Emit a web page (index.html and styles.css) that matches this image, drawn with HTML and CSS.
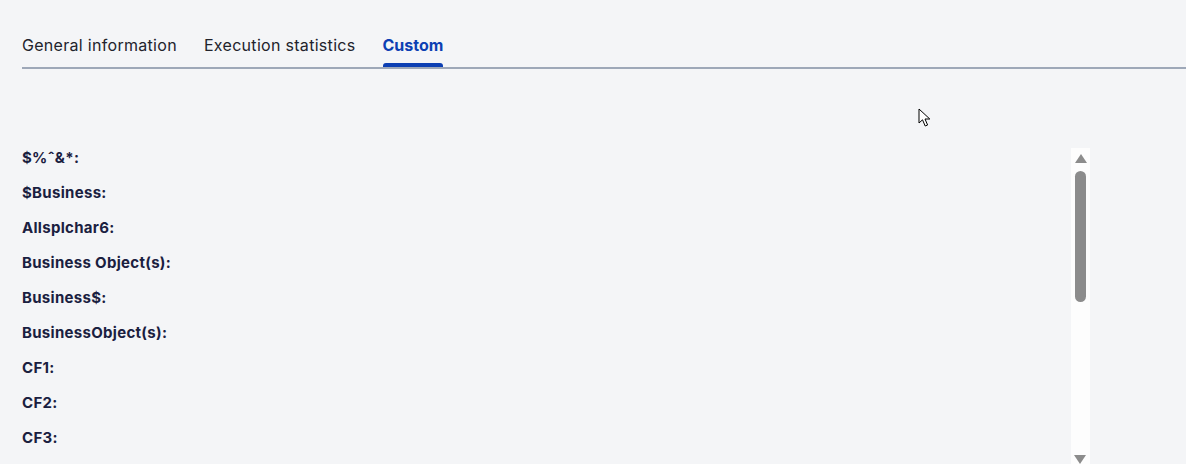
FILE: index.html
```html
<!DOCTYPE html>
<html lang="en">
<head>
<meta charset="utf-8">
<title>Custom fields</title>
<link rel="stylesheet" href="styles.css">
</head>
<body>
<div class="page">
  <nav class="tabs">
    <div class="tab">General information</div>
    <div class="tab">Execution statistics</div>
    <div class="tab active">Custom</div>
  </nav>

  <div class="panel">
    <div class="fields">
      <div class="field">$%ˆ&amp;*:</div>
      <div class="field">$Business:</div>
      <div class="field">Allsplchar6:</div>
      <div class="field">Business Object(s):</div>
      <div class="field">Business$:</div>
      <div class="field">BusinessObject(s):</div>
      <div class="field">CF1:</div>
      <div class="field">CF2:</div>
      <div class="field">CF3:</div>
    </div>
    <div class="scrollbar">
      <div class="arrow up"></div>
      <div class="thumb"></div>
      <div class="arrow down"></div>
    </div>
  </div>

  <svg class="cursor" width="13" height="20" viewBox="0 0 13 20">
    <path d="M1 1 L1 15 L4.5 11.8 L7.2 18 L9.6 17 L7 11 L11.8 11 Z" fill="#fff" stroke="#000" stroke-width="1" stroke-linejoin="round"/>
  </svg>
</div>
</body>
</html>
```

FILE: styles.css
```css
html, body {
  margin: 0;
  padding: 0;
  height: 100%;
  overflow: hidden;
}

body {
  background: #f4f5f7;
  font-family: Inter, "Noto Sans", sans-serif;
}

.page {
  position: relative;
  height: 464px;
  padding: 0 0 0 22px;
  box-sizing: border-box;
}

.tabs {
  display: flex;
  gap: 27px;
  padding-top: 34px;
  border-bottom: 2px solid #9ea8b8;
  height: 33px;
  box-sizing: content-box;
}

.tab {
  position: relative;
  font-size: 16px;
  line-height: 22px;
  color: #22232c;
  letter-spacing: 0.3px;
}

.tab.active {
  color: #0c3fb3;
  font-weight: 700;
  letter-spacing: 0;
}

.tab.active::after {
  content: "";
  position: absolute;
  left: 0;
  right: 0;
  bottom: 0;
  height: 4px;
  background: #0c3fb3;
  border-radius: 3px 3px 0 0;
}

.panel {
  display: flex;
  margin-top: 79px;
  width: 1068px;
  height: 316px;
  overflow: hidden;
}

.fields {
  flex: 1;
}

.field {
  font-size: 15px;
  font-weight: 700;
  color: #1a2040;
  line-height: 19px;
  margin-bottom: 16px;
  letter-spacing: 0.3px;
}

.scrollbar {
  width: 19px;
  background: #fdfdfd;
  display: flex;
  flex-direction: column;
  align-items: center;
  position: relative;
}

.arrow {
  width: 0;
  height: 0;
  border-left: 6.5px solid transparent;
  border-right: 6.5px solid transparent;
}

.arrow.up {
  margin-top: 6px;
  border-bottom: 9px solid #8c8c8c;
}

.arrow.down {
  position: absolute;
  top: 307px;
  left: 3px;
  border-top: 9px solid #8c8c8c;
}

.thumb {
  margin-top: 8px;
  width: 11px;
  height: 131px;
  background: #8c8c8c;
  border-radius: 6px;
}

.cursor {
  position: absolute;
  left: 918px;
  top: 108px;
}
```
